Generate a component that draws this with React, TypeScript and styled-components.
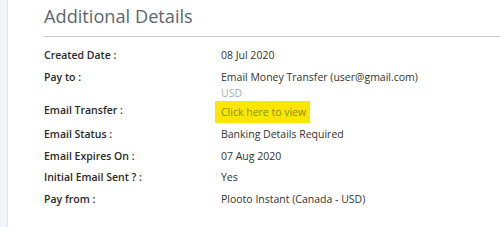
import React from 'react';
import styled, { createGlobalStyle } from 'styled-components';

const GlobalStyle = createGlobalStyle`
    body {
        margin: 0;
        background: #ffffff;
        font-family: "Open Sans", "Liberation Sans", sans-serif;
    }
`;

interface IRow {
    label: string;
    value: string;
    sub?: string;
    highlight?: boolean;
}

const rows: IRow[] = [
    { label: 'Created Date :', value: '08 Jul 2020' },
    { label: 'Pay to :', value: 'Email Money Transfer (user@gmail.com)', sub: 'USD' },
    { label: 'Email Transfer :', value: 'Click here to view', highlight: true },
    { label: 'Email Status :', value: 'Banking Details Required' },
    { label: 'Email Expires On :', value: '07 Aug 2020' },
    { label: 'Initial Email Sent ? :', value: 'Yes' },
    { label: 'Pay from :', value: 'Plooto Instant (Canada - USD)' },
];

export default function App() {
    return (
        <Page>
            <GlobalStyle />
            <Sidebar />
            <Content>
                <Title>Additional Details</Title>
                <List>
                    {rows.map((row) => (
                        <Row key={row.label} $center={row.highlight}>
                            <Label>{row.label}</Label>
                            <Value>
                                {row.highlight ? <Highlight>{row.value}</Highlight> : row.value}
                                {row.sub && <Sub>{row.sub}</Sub>}
                            </Value>
                        </Row>
                    ))}
                </List>
            </Content>
        </Page>
    );
}

const Page = styled.div`
    display: flex;
    height: 227px;
    overflow: hidden;
`;

const Sidebar = styled.div`
    width: 7px;
    flex-shrink: 0;
    background: #f2f5f9;
    border-right: 1px solid #dfe4ea;
`;

const Content = styled.div`
    flex: 1;
    padding-left: 36px;
`;

const Title = styled.div`
    font-size: 18.2px;
    color: #5c6670;
    padding-top: 3px;
    height: 33px;
    line-height: 26px;
    border-bottom: 1px solid #c9c9c9;
`;

const List = styled.div`
    display: flex;
    flex-direction: column;
    padding-top: 8px;
`;

const Row = styled.div<{ $center?: boolean }>`
    display: flex;
    align-items: ${(p) => (p.$center ? 'center' : 'flex-start')};
    min-height: 21.5px;
    font-size: 10.5px;
    line-height: 21.5px;
    padding-bottom: ${(p) => (p.$center ? '1px' : '0')};
`;

const Label = styled.div`
    width: 177px;
    flex-shrink: 0;
    font-weight: 600;
    color: #2a2a2a;
`;

const Value = styled.div`
    color: #333333;
    display: flex;
    flex-direction: column;
    align-items: flex-start;
`;

const Sub = styled.div`
    color: #a9aeb4;
    line-height: 10px;
    padding-bottom: 1px;
`;

const Highlight = styled.span`
    display: inline-block;
    background: #ffe600;
    color: #7a960c;
    margin: 2px 0 0 -6px;
    padding: 4px 4px 4px 6px;
    line-height: 14px;
`;
